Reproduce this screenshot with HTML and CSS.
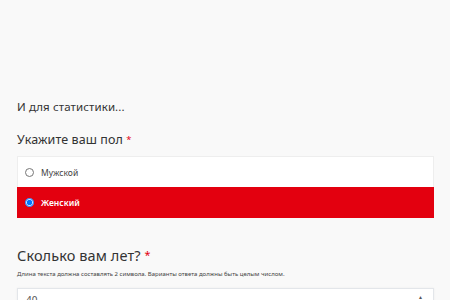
FILE: index.html
```html
<!DOCTYPE html>
<html lang="ru">

<head>
    <meta charset="UTF-8">
    <meta name="viewport" content="width=device-width, initial-scale=1.0">
    <title>Анкета</title>
    <link rel="stylesheet" href="styles.css">
</head>

<body>
    <section class="form">
        <h3 class="sectionTitle">И для статистики...</h3>

        <div class="question">
            <p class="label">Укажите ваш пол <span class="required">*</span></p>
            <div class="options">
                <label class="option">
                    <input type="radio" name="gender">
                    <span>Мужской</span>
                </label>
                <label class="option selected">
                    <input type="radio" name="gender" checked>
                    <span>Женский</span>
                </label>
            </div>
        </div>

        <div class="question age">
            <p class="label big">Сколько вам лет? <span class="required">*</span></p>
            <p class="hint">Длина текста должна составлять 2 символа. Варианты ответа должны быть целым числом.</p>
            <div class="inputBox">
                <input type="text" value="40">
                <span class="spin">&#9650;</span>
            </div>
        </div>
    </section>
</body>

</html>
```

FILE: styles.css
```css
* {
    box-sizing: border-box;
    margin: 0;
    padding: 0;
}

body {
    background-color: #f9f9f9;
    font-family: "Noto Sans", "Open Sans", sans-serif;
    color: #333;
}

.form {
    width: 434px;
    padding-left: 17px;
    padding-top: 99px;
}

.sectionTitle {
    font-size: 11.5px;
    font-weight: 400;
    line-height: 16px;
    color: #333;
    letter-spacing: 0.1px;
}

.question {
    margin-top: 16px;
}

.label {
    font-size: 12.5px;
    font-weight: 400;
    line-height: 18px;
    letter-spacing: 0.1px;
}

.required {
    color: #e3000f;
    font-size: 0.75em;
    vertical-align: top;
}

.options {
    margin-top: 7px;
    background-color: #fff;
    border: 1px solid #eeeeee;
}

.option {
    display: flex;
    align-items: center;
    height: 30px;
    padding-left: 7px;
    font-size: 8.5px;
    color: #444;
}

.option input {
    width: 9px;
    height: 9px;
    margin-right: 7px;
}

.option.selected {
    height: 31px;
    margin: 0 -1px -1px;
    padding-left: 8px;
    background-color: #e3000f;
    color: #fff;
    font-weight: 600;
}

.age {
    margin-top: 27px;
}

.label.big {
    font-size: 14.5px;
    line-height: 20px;
}

.hint {
    margin-top: 4px;
    font-size: 6px;
    line-height: 10px;
    color: #444;
}

.inputBox {
    margin-top: 9px;
    display: flex;
    align-items: flex-start;
    background-color: #fff;
    border: 1px solid #e3e6ea;
    box-shadow: 0 0 2px rgba(0, 0, 0, 0.06);
    height: 40px;
}

.inputBox input {
    flex: 1;
    border: none;
    outline: none;
    padding: 4px 8px 0 8px;
    font-family: inherit;
    font-size: 10px;
    line-height: 14px;
    color: #555;
    background: transparent;
}

.spin {
    margin: 5px 10px 0 0;
    font-size: 5px;
    color: #555;
}
```
